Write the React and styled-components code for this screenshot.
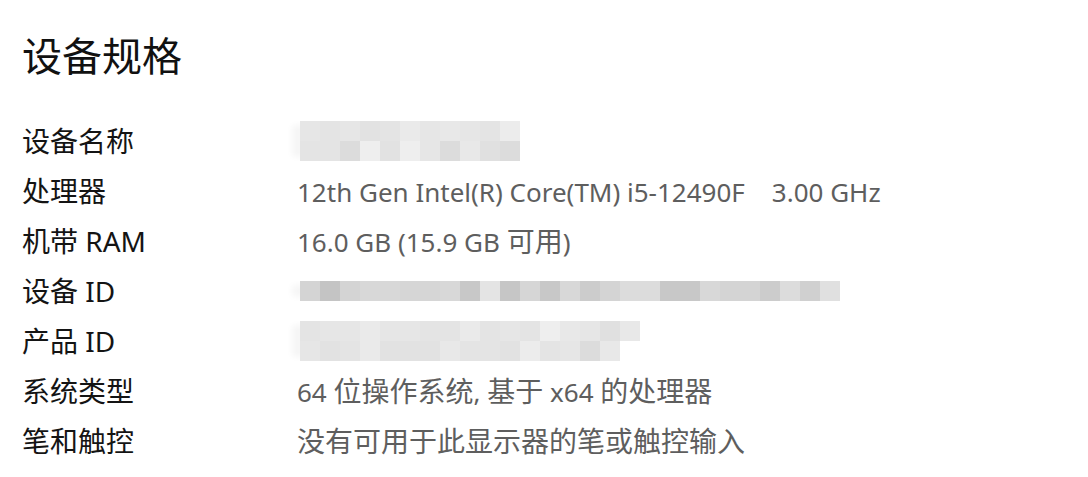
import React from "react";
import styled, { createGlobalStyle } from "styled-components";

const Global = createGlobalStyle`
  html, body { margin: 0; padding: 0; background: #ffffff; }
  body { width: 1088px; height: 477px; overflow: hidden; }
`;

const Page = styled.div`
  box-sizing: border-box;
  width: 1088px;
  height: 477px;
  padding: 30px 0 0 22px;
  background: #ffffff;
  font-family: "Noto Sans", "Noto Sans CJK SC", sans-serif;
`;

const Title = styled.h1`
  margin: 0 0 38px 0;
  font-size: 40px;
  line-height: 48px;
  font-weight: 400;
  color: #111111;
  font-family: "Noto Sans CJK SC", "Noto Sans", sans-serif;
`;

const Table = styled.div`
  display: grid;
  grid-template-columns: 275px 1fr;
  grid-auto-rows: 50px;
`;

const Label = styled.div`
  font-size: 28px;
  line-height: 50px;
  color: #141414;
  white-space: nowrap;
`;

const Value = styled.div`
  font-size: 28px;
  line-height: 50px;
  color: #5e5e5e;
  white-space: pre;
  display: flex;
  align-items: center;
`;

const Latin = styled.span`
  font-size: 26px;
  white-space: pre;
`;

const Mosaic = styled.div`
  display: grid;
  grid-template-columns: repeat(${(p) => p.$cols}, 20px);
  grid-auto-rows: 20px;
  margin-left: 3px;
  box-shadow: -12px 0 6px -4px #f6f6f6;
`;

const Cell = styled.div`
  background: ${(p) => p.$shade};
`;

const g = (v) => `rgb(${v},${v},${v})`;

function Pixelated({ cols, shades }) {
  return (
    <Mosaic $cols={cols}>
      {shades.map((s, i) => (
        <Cell key={i} $shade={g(s)} />
      ))}
    </Mosaic>
  );
}

function MixedText({ text }) {
  const parts = text.split(/([\x00-\x7F\u00a0]+)/).filter(Boolean);
  return (
    <span>
      {parts.map((p, i) =>
        /^[\x00-\x7F\u00a0]+$/.test(p) ? <Latin key={i}>{p}</Latin> : <span key={i}>{p}</span>
      )}
    </span>
  );
}

const nameShades = [
  230, 228, 230, 226, 228, 234, 230, 232, 230, 228, 236,
  228, 228, 220, 238, 226, 238, 230, 220, 232, 224, 220,
];

const idShades = [
  212, 196, 212, 216, 216, 214, 214, 216, 200, 228, 198, 214, 200, 216,
  204, 212, 220, 220, 200, 200, 216, 212, 212, 204, 220, 208, 224,
];

const productShades = [
  228, 230, 230, 234, 230, 230, 228, 228, 234, 228, 230, 228, 238, 232, 230, 224, 232,
  230, 226, 228, 234, 226, 226, 226, 232, 228, 228, 226, 236, 228, 230, 220, 232,
];

const rows = [
  { label: "设备名称", blur: { cols: 11, shades: nameShades } },
  { label: "处理器", value: "12th Gen Intel(R) Core(TM) i5-12490F\u00a0\u00a0\u00a0\u00a03.00 GHz" },
  { label: "机带 RAM", value: "16.0 GB (15.9 GB 可用)" },
  { label: "设备 ID", blur: { cols: 27, shades: idShades } },
  { label: "产品 ID", blur: { cols: 17, shades: productShades } },
  { label: "系统类型", value: "64 位操作系统, 基于 x64 的处理器" },
  { label: "笔和触控", value: "没有可用于此显示器的笔或触控输入" },
];

export default function App() {
  return (
    <Page>
      <Global />
      <Title>设备规格</Title>
      <Table>
        {rows.map((r) => (
          <React.Fragment key={r.label}>
            <Label>{r.label}</Label>
            <Value>
              {r.blur ? (
                <Pixelated cols={r.blur.cols} shades={r.blur.shades} />
              ) : (
                <MixedText text={r.value} />
              )}
            </Value>
          </React.Fragment>
        ))}
      </Table>
    </Page>
  );
}
